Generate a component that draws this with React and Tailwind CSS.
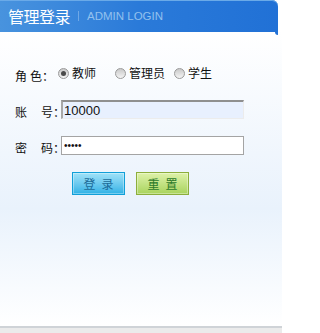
import { useState } from "react";

const cjk = { fontFamily: '"Noto Sans CJK SC", "Noto Sans", sans-serif' };

function Radio({ checked, label, onPick, className = "" }) {
  return (
    <label className={"flex items-center cursor-pointer " + className} onClick={onPick}>
      <span className="w-[11px] h-[11px] rounded-full border border-[#9a9a9a] bg-gradient-to-b from-[#c9c9c9] to-[#f4f4f4] flex items-center justify-center">
        {checked && <span className="w-[5px] h-[5px] rounded-full bg-[#4a4a4a]" />}
      </span>
      <span className="ml-[3px] text-[12px] leading-none text-[#111]">{label}</span>
    </label>
  );
}

function Label({ a, b, wide }) {
  return (
    <span className="w-[46px] shrink-0 flex items-end text-[12px] leading-none text-[#111] pb-[1px]">
      <span>{a}</span>
      <span className={wide ? "ml-auto" : "ml-[3px]"}>{b}</span>
      <span className="w-[8px] overflow-visible">：</span>
    </span>
  );
}

export default function App() {
  const [role, setRole] = useState("teacher");
  const [account, setAccount] = useState("10000");
  const [pwd, setPwd] = useState("12345");

  return (
    <div className="w-[282px] h-[333px] bg-white overflow-hidden flex flex-col" style={cjk}>
      {/* header */}
      <div className="relative w-[278px] h-[32px] shrink-0 rounded-tr-[6px] bg-gradient-to-r from-[#4893de] via-[#2a7ad9] to-[#2171d6] shadow-[inset_0_1px_0_#6aaae8] flex items-center pl-[8px]">
        <span className="text-[16px] leading-none text-white tracking-[-0.5px]">管理登录</span>
        <span className="ml-[8px] w-px h-[10px] bg-[#6fa8e6]" />
        <span className="ml-[8px] mt-[2px] text-[11.5px] leading-none text-[#93c1ee]" style={{ fontFamily: '"Liberation Sans", Arial, sans-serif' }}>ADMIN LOGIN</span>
        <span className="absolute right-0 -bottom-[3px] w-[3px] h-[4px] bg-[#2171d6] rounded-bl-[3px]" />
      </div>

      {/* body */}
      <div className="flex-1 flex flex-col">
        <div className="flex-1 flex">
          <div className="w-[7px] shrink-0 bg-gradient-to-r from-[#d7dbdf] via-[#eef0f2] to-transparent" />
          <div className="flex-1 -ml-[7px] pl-[15px] pt-[31px] bg-gradient-to-b from-white via-[#e9f2fc] via-60% to-white">
            {/* role */}
            <div className="flex items-end h-[20px]">
              <Label a="角" b="色" />
              <div className="flex items-center h-[20px] -mt-[6px] ml-[-3px]">
                <Radio checked={role === "teacher"} label="教师" onPick={() => setRole("teacher")} />
                <Radio checked={role === "admin"} label="管理员" className="ml-[19px]" onPick={() => setRole("admin")} />
                <Radio checked={role === "student"} label="学生" className="ml-[9px]" onPick={() => setRole("student")} />
              </div>
            </div>

            {/* account */}
            <div className="flex items-end mt-[17px]">
              <Label a="账" b="号" wide />
              <input
                value={account}
                onChange={e => setAccount(e.target.value)}
                className="w-[183px] h-[19px] bg-[#e8f0fe] border-t-2 border-l-2 border-r border-b border-t-[#8f8f8f] border-l-[#a8a8a8] border-r-[#ececec] border-b-[#ececec] px-[1px] text-[13px] leading-none text-[#111] outline-none"
                style={{ fontFamily: '"Liberation Sans", Arial, sans-serif' }}
              />
            </div>

            {/* password */}
            <div className="flex items-end mt-[17px]">
              <Label a="密" b="码" wide />
              <input
                type="password"
                value={pwd}
                onChange={e => setPwd(e.target.value)}
                className="w-[183px] h-[19px] bg-white border border-[#a4a4a4] px-[2px] text-[10px] leading-none text-[#111] outline-none"
                style={{ fontFamily: '"Liberation Sans", Arial, sans-serif' }}
              />
            </div>

            {/* buttons */}
            <div className="flex mt-[17px] ml-[57px] gap-[11px]">
              <button className="w-[53px] h-[23px] border border-[#119fd8] bg-gradient-to-b from-[#9ee2f8] to-[#2ab2e6] shadow-[inset_0_0_0_1px_rgba(255,255,255,0.35)] flex items-center justify-center gap-[6px] text-[12px] leading-none text-[#1c6b98]">
                <span>登</span><span>录</span>
              </button>
              <button className="w-[53px] h-[23px] border border-[#8cae3c] bg-gradient-to-b from-[#def2a8] to-[#a9d35c] shadow-[inset_0_0_0_1px_rgba(255,255,255,0.35)] flex items-center justify-center gap-[6px] text-[12px] leading-none text-[#2c7a2a]">
                <span>重</span><span>置</span>
              </button>
            </div>
          </div>
        </div>
        <div className="h-[2px] bg-[#cfd3d7] shrink-0" />
        <div className="h-[5px] bg-[#ebebeb] shrink-0" />
      </div>
    </div>
  );
}
